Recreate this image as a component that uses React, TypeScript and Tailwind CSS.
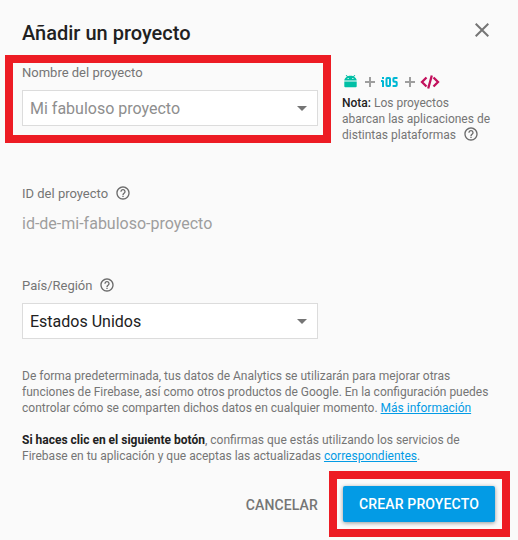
import React from "react";

function HelpIcon({ className = "" }: { className?: string }) {
  return (
    <svg viewBox="0 0 24 24" className={`size-4 shrink-0 fill-[#6b6b6b] ${className}`}>
      <path d="M11 18h2v-2h-2v2zm1-16C6.48 2 2 6.48 2 12s4.48 10 10 10 10-4.48 10-10S17.52 2 12 2zm0 18c-4.41 0-8-3.59-8-8s3.59-8 8-8 8 3.59 8 8-3.59 8-8 8zm0-14c-2.21 0-4 1.79-4 4h2c0-1.1.9-2 2-2s2 .9 2 2c0 2-3 1.75-3 5h2c0-2.25 3-2.5 3-5 0-2.21-1.79-4-4-4z" />
    </svg>
  );
}

function SelectBox({ text, className }: { text: string; className: string }) {
  return (
    <div className="flex h-9 w-[296px] items-center justify-between border border-[#dcdcdc] bg-white pr-[10px] pl-[7px]">
      <span className={`pt-[2px] text-[16px] leading-6 ${className}`}>{text}</span>
      <svg viewBox="0 0 10 5" className="h-[5px] w-[10px] fill-[#757575]">
        <path d="M0 0h10L5 5z" />
      </svg>
    </div>
  );
}

function Platforms() {
  return (
    <div className="flex h-4 items-start">
      <svg viewBox="0 0 13 13" className="mt-px ml-[2px] h-[13px] w-[13px] fill-[#00bfa5]">
        <path d="M.3 5.600C.3 4 1.300 2.500 3 1.700L1.700.4l.6-.5 1.500 1.400c1.600-.6 3.800-.6 5.400 0L10.700-.1l.6.5L10 1.700c1.700.8 2.700 2.300 2.700 3.900zM3.600 3v1.100h1.100V3zm4.700 0v1.100h1.100V3zM.3 6.500h12.400V11.200q0 1-1 1H1.300q-1 0-1-1z" />
      </svg>
      <svg viewBox="0 0 10 10" className="mt-[3px] ml-[8px] size-[10px] fill-[#9e9e9e]">
        <path d="M4 0h2v4h4v2H6v4H4V6H0V4h4z" />
      </svg>
      <svg viewBox="0 0 17 11" className="mt-[3px] ml-[6px] h-[11px] w-[17px] fill-none stroke-[#00b8d4] stroke-2">
        <path d="M2 3.500V10M2 0v2M0 4h2M5.500 1.800v6.400q0 .8.800.8h1.900q.8 0 .8-.8V1.800q0-.8-.8-.8H6.300q-.8 0-.8.8zM16.500 1h-3.200q-.9 0-.9.900v1.900q0 .9.900.9h1.500q.9 0 .9.900v2.500q0 .9-.9.900h-3.200" />
      </svg>
      <svg viewBox="0 0 10 10" className="mt-[3px] ml-[7px] size-[10px] fill-[#9e9e9e]">
        <path d="M4 0h2v4h4v2H6v4H4V6H0V4h4z" />
      </svg>
      <svg viewBox="0 0 20 14" className="mt-px ml-[5px] h-[14px] w-[20px] fill-none stroke-[#c2105c] stroke-[2.3]">
        <path d="M6.500 2.500L2 7l4.500 4.500M13.500 2.500L18 7l-4.500 4.500M11.800.5L8.200 13.500" />
      </svg>
    </div>
  );
}

export default function App() {
  return (
    <div className="relative h-[540px] w-[518px] overflow-hidden bg-[#fafafa] pl-[22px] font-['Roboto',sans-serif] text-[12px] leading-4 text-[#757575]">
      <header className="flex h-[65px] justify-between pr-[29px]">
        <h1 className="pt-[21px] text-[20px] leading-6 font-medium text-[#212121]">Añadir un proyecto</h1>
        <svg viewBox="0 0 14 14" className="mt-[23px] size-[14px] fill-none stroke-[#757575] stroke-2">
          <path d="M.7.700l12.600 12.600M13.300.700L.7 13.300" />
        </svg>
      </header>

      <div className="flex h-[121px]">
        <section className="w-[296px] shrink-0">
          <div className="mb-[9px] text-[13px] leading-4">Nombre del proyecto</div>
          <SelectBox text="Mi fabuloso proyecto" className="text-[#8e8e8e]" />
        </section>
        <aside className="ml-6 pt-[9px]">
          <Platforms />
          <p className="mt-[5px] whitespace-nowrap">
            <b className="font-medium text-[#212121]">Nota:</b> Los proyectos
            <br />
            abarcan las aplicaciones de
            <br />
            <span className="flex items-center">
              distintas plataformas
              <HelpIcon className="-mt-[2px] ml-[7px]" />
            </span>
          </p>
        </aside>
      </div>

      <section className="h-[92px]">
        <div className="flex items-center text-[13px] leading-4">
          ID del proyecto
          <HelpIcon className="-mt-[2px] ml-[7px]" />
        </div>
        <div className="mt-[10px] text-[16px] leading-6 text-[#9e9e9e]">id-de-mi-fabuloso-proyecto</div>
      </section>

      <section className="h-[90px]">
        <div className="mb-[9px] flex items-center text-[13px] leading-4">
          País/Región
          <HelpIcon className="-mt-[2px] ml-[7px]" />
        </div>
        <SelectBox text="Estados Unidos" className="text-[#212121]" />
      </section>

      <div className="h-[118px] whitespace-nowrap">
        <p>
          De forma predeterminada, tus datos de Analytics se utilizarán para mejorar otras
          <br />
          funciones de Firebase, así como otros productos de Google. En la configuración puedes
          <br />
          controlar cómo se comparten dichos datos en cualquier momento.{" "}
          <a className="text-[#039be5] underline">Más información</a>
        </p>
        <p className="mt-4">
          <b className="font-bold text-[#212121]">Si haces clic en el siguiente botón</b>, confirmas que estás utilizando los servicios de
          <br />
          Firebase en tu aplicación y que aceptas las actualizadas{" "}
          <a className="text-[#039be5] underline">correspondientes</a>.
        </p>
      </div>

      <footer className="flex items-center justify-end pr-[23px] text-[14px] font-medium">
        <button className="mr-[25px] pt-[2px] tracking-[0.14px]">CANCELAR</button>
        <button className="h-9 w-[152px] rounded-[2px] bg-[#039be5] tracking-[0.14px] text-white shadow-[0_1px_4px_rgba(0,0,0,0.4)]">
          CREAR PROYECTO
        </button>
      </footer>

      <div className="pointer-events-none absolute top-[55px] left-[5px] h-[88px] w-[326px] border-8 border-[#ed1c24]" />
      <div className="pointer-events-none absolute top-[471px] left-[329px] h-[66px] w-[181px] border-8 border-[#ed1c24]" />
    </div>
  );
}
